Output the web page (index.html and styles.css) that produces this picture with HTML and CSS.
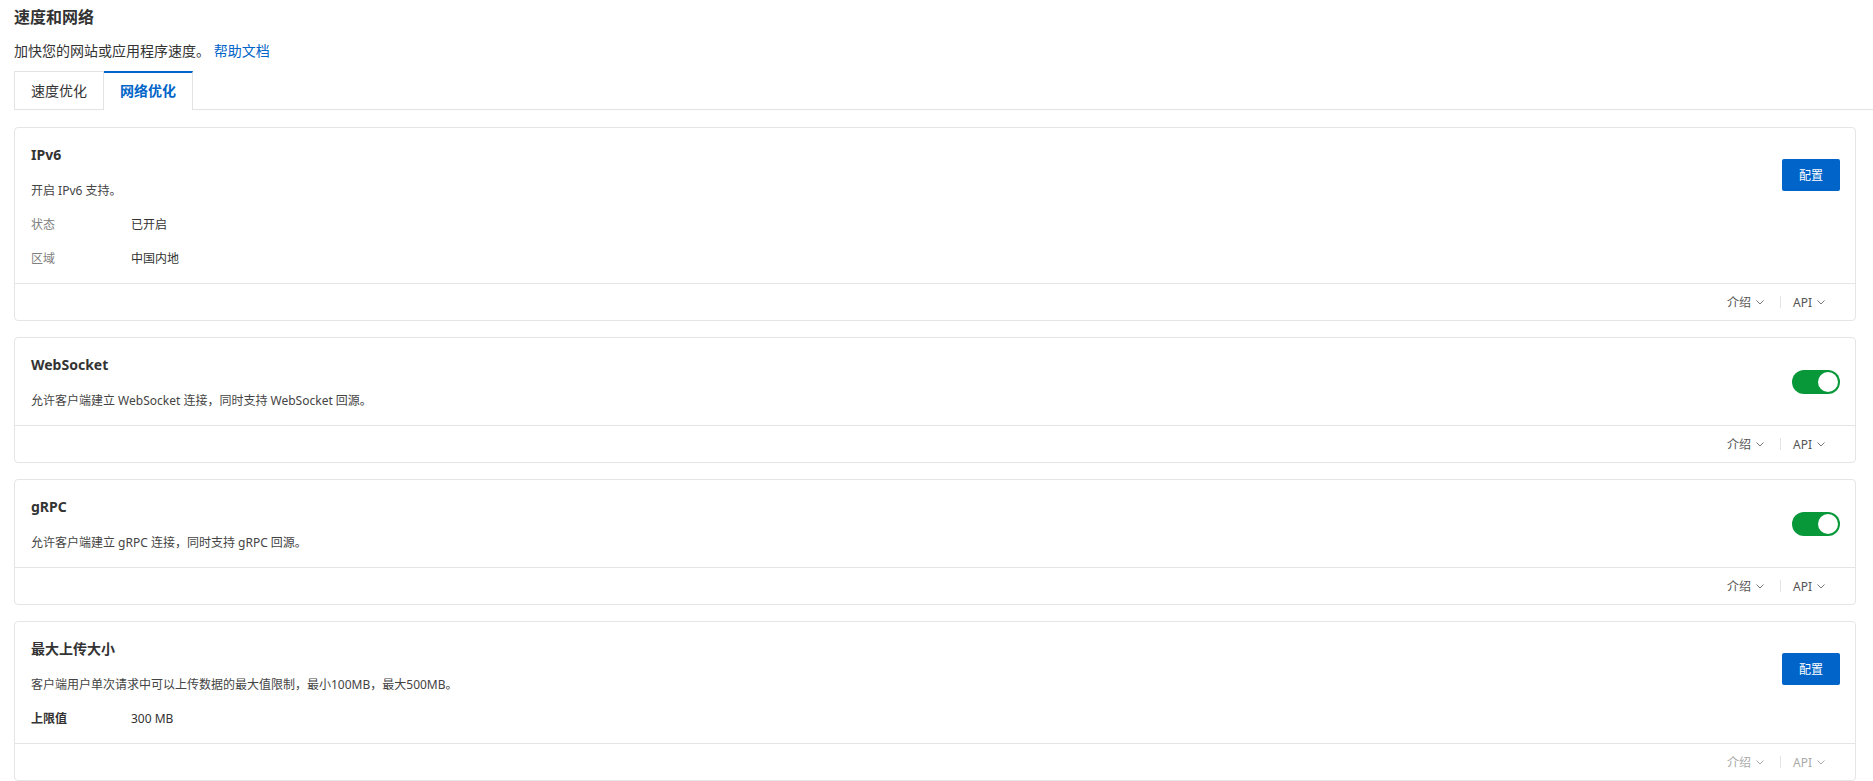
FILE: index.html
```html
<!DOCTYPE html>
<html lang="zh">
<head>
  <meta charset="UTF-8">
  <meta name="viewport" content="width=device-width, initial-scale=1.0">
  <title>速度和网络</title>
  <link rel="stylesheet" href="styles.css">
</head>
<body>

  <div class="page">
    <h1 class="page-title">速度和网络</h1>
    <p class="page-desc">加快您的网站或应用程序速度。 <a class="help-link" href="#">帮助文档</a></p>

    <div class="tabs">
      <div class="tab">速度优化</div>
      <div class="tab active">网络优化</div>
    </div>

    <div class="card-list">

      <div class="card">
        <div class="card-body">
          <div class="card-main">
            <div class="card-title">IPv6</div>
            <div class="card-desc">开启 IPv6 支持。</div>
            <div class="field"><span class="field-label">状态</span><span class="field-value">已开启</span></div>
            <div class="field"><span class="field-label">区域</span><span class="field-value">中国内地</span></div>
          </div>
          <button class="btn-primary">配置</button>
        </div>
        <div class="card-foot">
          <span class="foot-link">介绍<svg class="chevron" width="8" height="5" viewBox="0 0 8 5"><path d="M0.5 0.5 L4 4 L7.5 0.5" fill="none" stroke="#777" stroke-width="1"/></svg></span>
          <span class="foot-sep"></span>
          <span class="foot-link">API<svg class="chevron" width="8" height="5" viewBox="0 0 8 5"><path d="M0.5 0.5 L4 4 L7.5 0.5" fill="none" stroke="#777" stroke-width="1"/></svg></span>
        </div>
      </div>

      <div class="card">
        <div class="card-body">
          <div class="card-main">
            <div class="card-title">WebSocket</div>
            <div class="card-desc">允许客户端建立 WebSocket 连接，同时支持 WebSocket 回源。</div>
          </div>
          <span class="switch on"><span class="knob"></span></span>
        </div>
        <div class="card-foot">
          <span class="foot-link">介绍<svg class="chevron" width="8" height="5" viewBox="0 0 8 5"><path d="M0.5 0.5 L4 4 L7.5 0.5" fill="none" stroke="#777" stroke-width="1"/></svg></span>
          <span class="foot-sep"></span>
          <span class="foot-link">API<svg class="chevron" width="8" height="5" viewBox="0 0 8 5"><path d="M0.5 0.5 L4 4 L7.5 0.5" fill="none" stroke="#777" stroke-width="1"/></svg></span>
        </div>
      </div>

      <div class="card">
        <div class="card-body">
          <div class="card-main">
            <div class="card-title">gRPC</div>
            <div class="card-desc">允许客户端建立 gRPC 连接，同时支持 gRPC 回源。</div>
          </div>
          <span class="switch on"><span class="knob"></span></span>
        </div>
        <div class="card-foot">
          <span class="foot-link">介绍<svg class="chevron" width="8" height="5" viewBox="0 0 8 5"><path d="M0.5 0.5 L4 4 L7.5 0.5" fill="none" stroke="#777" stroke-width="1"/></svg></span>
          <span class="foot-sep"></span>
          <span class="foot-link">API<svg class="chevron" width="8" height="5" viewBox="0 0 8 5"><path d="M0.5 0.5 L4 4 L7.5 0.5" fill="none" stroke="#777" stroke-width="1"/></svg></span>
        </div>
      </div>

      <div class="card">
        <div class="card-body">
          <div class="card-main">
            <div class="card-title">最大上传大小</div>
            <div class="card-desc">客户端用户单次请求中可以上传数据的最大值限制，最小100MB，最大500MB。</div>
            <div class="field"><span class="field-label strong">上限值</span><span class="field-value">300 MB</span></div>
          </div>
          <button class="btn-primary">配置</button>
        </div>
        <div class="card-foot faded">
          <span class="foot-link">介绍<svg class="chevron" width="8" height="5" viewBox="0 0 8 5"><path d="M0.5 0.5 L4 4 L7.5 0.5" fill="none" stroke="#aaa" stroke-width="1"/></svg></span>
          <span class="foot-sep"></span>
          <span class="foot-link">API<svg class="chevron" width="8" height="5" viewBox="0 0 8 5"><path d="M0.5 0.5 L4 4 L7.5 0.5" fill="none" stroke="#aaa" stroke-width="1"/></svg></span>
        </div>
      </div>

    </div>
  </div>

</body>
</html>
```

FILE: styles.css
```css
body {
  margin: 0;
  background: #fff;
  color: #333;
  font-family: "Noto Sans", "Noto Sans CJK SC", sans-serif;
}
.page {
  padding: 5px 17px 0 14px;
}
.page-title {
  margin: 0;
  font-size: 16px;
  line-height: 24px;
  font-weight: bold;
  color: #333;
}
.page-desc {
  margin: 12px 0 0;
  font-size: 14px;
  line-height: 20px;
  color: #333;
}
.help-link {
  color: #0064c8;
  text-decoration: none;
}
.tabs {
  display: flex;
  margin: 10px -17px 0 0;
  border-bottom: 1px solid #e3e3e3;
}
.tab {
  height: 37px;
  line-height: 37px;
  padding: 0 16px;
  font-size: 14px;
  color: #333;
  border: 1px solid #e3e3e3;
  border-bottom: none;
  background: #fff;
}
.tab + .tab {
  border-left: none;
}
.tab.active {
  height: 37px;
  line-height: 36px;
  padding: 0 16px;
  margin-bottom: -1px;
  border-top: 2px solid #0064c8;
  color: #0064c8;
  font-weight: bold;
}
.card-list {
  display: flex;
  flex-direction: column;
  gap: 16px;
  margin-top: 17px;
}
.card {
  border: 1px solid #e5e5e5;
  border-radius: 4px;
  background: #fff;
}
.card-body {
  display: flex;
  align-items: flex-start;
  justify-content: space-between;
  padding: 16px 15px 14px 16px;
}
.card-title {
  font-size: 14px;
  line-height: 22px;
  font-weight: bold;
  color: #333;
}
.card-desc {
  margin-top: 15px;
  font-size: 12px;
  line-height: 20px;
  color: #444;
}
.field {
  display: flex;
  margin-top: 14px;
  font-size: 12px;
  line-height: 20px;
}
.field-label {
  width: 100px;
  color: #808080;
}
.field-label.strong {
  color: #333;
  font-weight: bold;
}
.field-value {
  color: #333;
}
.btn-primary {
  margin-top: 15px;
  width: 58px;
  height: 32px;
  border: none;
  border-radius: 2px;
  background: #0064c8;
  color: #fff;
  font-family: inherit;
  font-size: 12px;
  cursor: pointer;
}
.switch {
  display: flex;
  align-items: center;
  margin-top: 16px;
  width: 48px;
  height: 24px;
  border-radius: 12px;
  background: #bbb;
  box-sizing: border-box;
  padding: 2px;
}
.switch.on {
  background: #08983a;
  justify-content: flex-end;
}
.knob {
  width: 20px;
  height: 20px;
  border-radius: 50%;
  background: #fff;
}
.card-foot {
  display: flex;
  align-items: center;
  justify-content: flex-end;
  height: 36px;
  padding-right: 30px;
  border-top: 1px solid #e5e5e5;
  font-size: 12px;
  color: #555;
}
.card-foot.faded {
  color: #aaa;
}
.foot-link {
  display: flex;
  align-items: center;
  gap: 5px;
  cursor: pointer;
}
.foot-sep {
  width: 1px;
  height: 12px;
  margin: 0 12px 0 16px;
  background: #e3e3e3;
}
```
